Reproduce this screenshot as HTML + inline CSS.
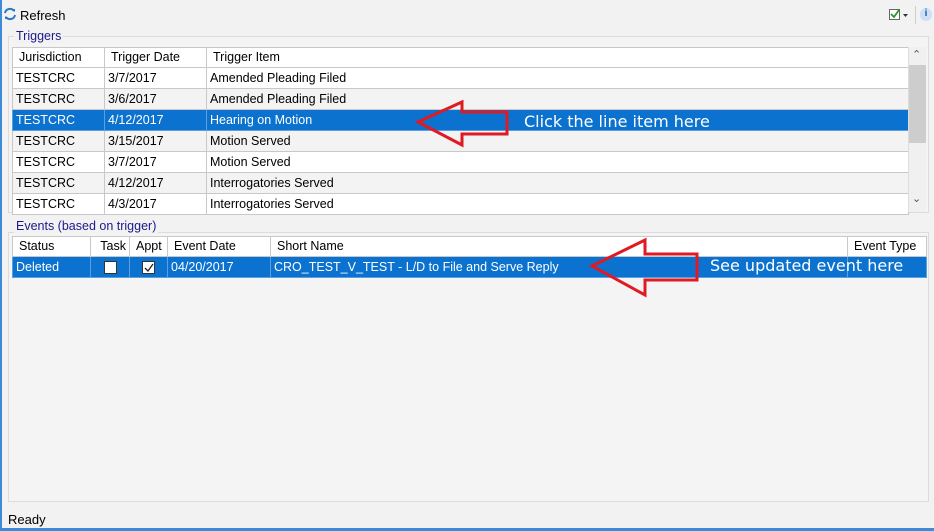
<!DOCTYPE html>
<html><head><style>
*{margin:0;padding:0;box-sizing:border-box}
body{width:934px;height:531px;background:#f2f2f2;font-family:"Liberation Sans",sans-serif;font-size:12px;color:#000;position:relative;overflow:hidden}
.abs{position:absolute}
.gb{position:absolute;border:1px solid #dcdcdc;background:#f4f4f4}
.lbl{position:absolute;color:#1a1a8c;font-size:12.5px;background:#f2f2f2;padding:0 2px}
table{border-collapse:collapse;position:absolute;table-layout:fixed;font-size:12.5px}
td,th{border:1px solid #c8c8c8;height:21px;padding:0 3px;white-space:nowrap;overflow:hidden;font-weight:normal;text-align:left;line-height:19px}
th{height:20px;background:#fff;padding-left:6px}
tr:nth-child(odd) td{background:#f3f3f3}
tr:nth-child(even) td{background:#fff}
tr.sel td{background:#0b72cf!important;color:#fff;border-color:#5aa0e0}
.cb{display:inline-block;width:13px;height:13px;background:#fff;border:1px solid #333;vertical-align:middle;position:relative}
.ov{position:absolute;color:#fff;font-family:"DejaVu Sans","Liberation Sans",sans-serif;font-size:16px}
</style></head><body>
<div class="abs" style="left:0;top:0;width:2px;height:531px;background:#3c8ad8"></div>
<div class="abs" style="left:0;top:528px;width:934px;height:3px;background:#3c8ad8"></div>
<svg class="abs" style="left:3px;top:7px" width="14" height="14" viewBox="0 0 14 14"><path d="M2 6a5 5 0 0 1 9-2" stroke="#2a78c8" stroke-width="2" fill="none"/><path d="M12 8a5 5 0 0 1-9 2" stroke="#2a78c8" stroke-width="2" fill="none"/><path d="M9 2l3 0 0 3z M5 12l-3 0 0-3z" fill="#2a78c8"/></svg>
<div class="abs" style="left:20px;top:8px;font-size:13px">Refresh</div>
<svg class="abs" style="left:889px;top:9px" width="22" height="12"><rect x="0.5" y="0.5" width="10" height="10" fill="#fff" stroke="#666"/><path d="M2 5l3 3 5-7" stroke="#2a9a2a" stroke-width="1.8" fill="none"/><path d="M14 5h5l-2.5 3z" fill="#333"/></svg>
<div class="abs" style="left:915px;top:6px;width:1px;height:18px;background:#ccc"></div>
<div class="abs" style="left:920px;top:8px;width:12px;height:13px;border-radius:6px;background:#cfe0f5;color:#1a5fb0;font-size:10px;text-align:center;font-weight:bold">i</div>
<div class="gb" style="left:8px;top:36px;width:921px;height:177px"></div>
<div class="lbl" style="left:14px;top:29px">Triggers</div>
<table style="left:12px;top:47px;width:897px">
<colgroup><col style="width:92px"><col style="width:102px"><col></colgroup>
<tr><th>Jurisdiction</th><th>Trigger Date</th><th>Trigger Item</th></tr>
<tr><td>TESTCRC</td><td>3/7/2017</td><td>Amended Pleading Filed</td></tr>
<tr><td>TESTCRC</td><td>3/6/2017</td><td>Amended Pleading Filed</td></tr>
<tr class="sel"><td>TESTCRC</td><td>4/12/2017</td><td>Hearing on Motion</td></tr>
<tr><td>TESTCRC</td><td>3/15/2017</td><td>Motion Served</td></tr>
<tr><td>TESTCRC</td><td>3/7/2017</td><td>Motion Served</td></tr>
<tr><td>TESTCRC</td><td>4/12/2017</td><td>Interrogatories Served</td></tr>
<tr><td style="height:19px">TESTCRC</td><td>4/3/2017</td><td>Interrogatories Served</td></tr>
</table>
<div class="abs" style="left:908px;top:47px;width:18px;height:165px;background:#f0f0f0;border-left:1px solid #ddd"></div>
<div class="abs" style="left:909px;top:65px;width:17px;height:78px;background:#cdcdcd"></div>
<div class="abs" style="left:912px;top:48px;font-size:11px;color:#555">&#8963;</div>
<div class="abs" style="left:912px;top:192px;font-size:11px;color:#555">&#8964;</div>
<div class="gb" style="left:8px;top:232px;width:921px;height:270px"></div>
<div class="lbl" style="left:14px;top:219px">Events (based on trigger)</div>
<table style="left:12px;top:236px;width:915px">
<colgroup><col style="width:78px"><col style="width:39px"><col style="width:38px"><col style="width:103px"><col style="width:577px"><col></colgroup>
<tr><th>Status</th><th style="text-align:right">Task</th><th>Appt</th><th>Event Date</th><th>Short Name</th><th>Event Type</th></tr>
<tr class="sel"><td style="height:20px">Deleted</td><td style="text-align:center"><span class="cb"></span></td><td style="text-align:center"><span class="cb"><svg class="abs" style="left:1px;top:1px" width="10" height="10"><path d="M1 5l3 3 5-7" stroke="#222" stroke-width="1.3" fill="none"/></svg></span></td><td>04/20/2017</td><td>CRO_TEST_V_TEST - L/D to File and Serve Reply</td><td></td></tr>
</table>
<div class="abs" style="left:8px;top:512px;font-size:13px">Ready</div>
<svg class="abs" style="left:0;top:0" width="934" height="531">
<path d="M418 122 L462 102 L462 112 L507 112 L507 134 L462 134 L462 145 Z" fill="none" stroke="#e01a22" stroke-width="3" stroke-linejoin="miter"/>
<path d="M592 266 L645 240 L645 254 L697 254 L697 280 L645 280 L645 295 Z" fill="none" stroke="#e01a22" stroke-width="3" stroke-linejoin="miter"/>
</svg>
<div class="ov" style="left:524px;top:112px">Click the line item here</div>
<div class="ov" style="left:710px;top:256px">See updated event here</div>
</body></html>
